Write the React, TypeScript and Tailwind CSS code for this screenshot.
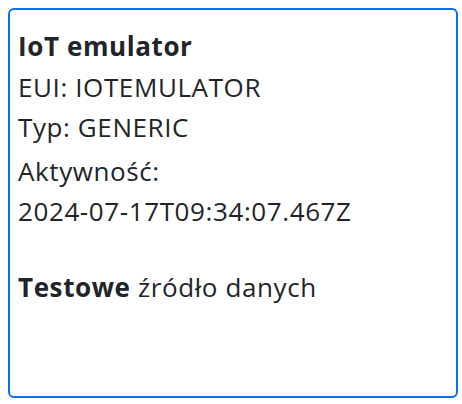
export default function App() {
  return (
    <div className="pt-2 pl-2 bg-white" style={{ fontFamily: '"Open Sans", sans-serif' }}>
      <div className="w-[450px] h-[390px] border-2 border-[#0d6efd] rounded-md px-2 pt-4 text-[26px] tracking-[0.6px] text-[#212529]">
        <div className="leading-10 font-bold mb-px">IoT emulator</div>
        <div className="leading-10">EUI: IOTEMULATOR</div>
        <div className="leading-10">Typ: GENERIC</div>
        <div className="leading-10 mt-1">Aktywność:</div>
        <div className="leading-10">2024-07-17T09:34:07.467Z</div>
        <div className="leading-10 mt-9">
          <span className="font-bold">Testowe</span> źródło danych
        </div>
      </div>
    </div>
  );
}
